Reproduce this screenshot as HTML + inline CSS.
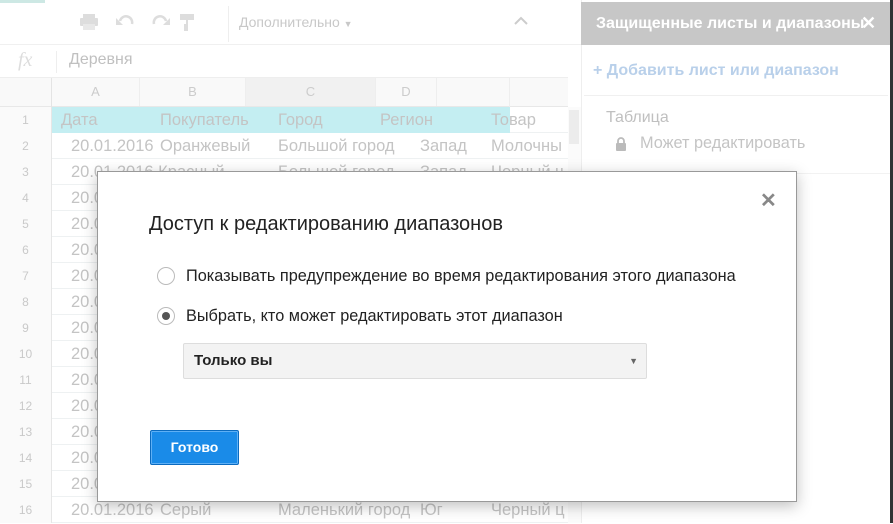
<!DOCTYPE html>
<html><head><meta charset="utf-8"><style>
*{box-sizing:border-box;margin:0;padding:0}
body{width:893px;height:523px;overflow:hidden;background:#fff;font-family:"Liberation Sans",Arial,sans-serif;position:relative;color:#bbb}
.a{position:absolute}
.row{position:absolute;left:0;width:568px;height:26px;border-bottom:1px solid #eef1f2;font-size:16.5px;line-height:27px}
.num{position:absolute;left:0;width:52px;text-align:center;font-size:12px;color:#c9c9c9;background:#fafafa;height:26px;border-right:1px solid #e6e6e6}
.c{position:absolute;top:0;white-space:nowrap;overflow:hidden;height:26px;color:#c4c4c4}
</style></head><body>
<div class="a" style="left:0;top:0;width:45px;height:3px;background:#cde8e4"></div>
<div class="a" style="left:0;top:5px;width:581px;height:40px;border-bottom:1px solid #f0f0f0"></div>
<div class="a" style="left:228px;top:6px;width:1px;height:36px;background:#eee"></div>
<svg class="a" style="left:78px;top:12px" width="120" height="20" viewBox="0 0 120 20" fill="#ddd">
<rect x="2" y="6" width="18" height="8" rx="1"/><rect x="5" y="2" width="12" height="4"/><rect x="5" y="12" width="12" height="6" fill="#e8e8e8"/>
<path d="M42 9 a6 6 0 0 1 12 3" stroke="#ddd" stroke-width="2.5" fill="none"/><path d="M38 6 v7 h7z"/>
<path d="M88 9 a6 6 0 0 0 -12 3" stroke="#ddd" stroke-width="2.5" fill="none"/><path d="M92 6 v7 h-7z"/>
<rect x="102" y="2" width="14" height="6"/><rect x="108" y="8" width="2" height="4"/><rect x="106" y="12" width="4" height="7"/>
</svg>
<div class="a" style="left:239px;top:14px;font-size:14px;color:#c8c8c8">Дополнительно <span style="font-size:9px">▼</span></div>
<svg class="a" style="left:513px;top:14px" width="16" height="12"><path d="M2 10 L8 4 L14 10" stroke="#ccc" stroke-width="2" fill="none"/></svg>
<div class="a" style="left:18px;top:49px;font-family:'Liberation Serif',serif;font-style:italic;font-size:20px;color:#ddd">fx</div>
<div class="a" style="left:56px;top:51px;width:1px;height:22px;background:#eee"></div>
<div class="a" style="left:69px;top:51px;font-size:16px;color:#c0c0c0">Деревня</div>
<div class="a" style="left:0;top:77px;width:568px;height:30px;background:#f9f9f9;border-top:1px solid #eee;border-bottom:1px solid #e8e8e8;font-size:13px;color:#ccc;line-height:28px">
<div class="a" style="left:0;width:52px;height:29px;border-right:1px solid #e4e4e4"></div>
<div class="a" style="left:52px;width:88px;text-align:center;border-right:1px solid #eee">A</div>
<div class="a" style="left:140px;width:106px;text-align:center;border-right:1px solid #eee">B</div>
<div class="a" style="left:246px;width:130px;text-align:center;border-right:1px solid #eee;background:#f1f1f1">C</div>
<div class="a" style="left:376px;width:61px;text-align:center;border-right:1px solid #eee">D</div>
<div class="a" style="left:437px;width:73px;border-right:1px solid #eee;height:29px"></div>
</div>
<div class="a" style="left:568px;top:107px;width:13px;height:416px;background:#fbfbfb"></div>
<div class="a" style="left:569px;top:110px;width:10px;height:34px;background:#ececec"></div>
<div class="row" style="top:107px"><div class="num">1</div><div class="c" style="left:52px;width:458px;background:#c4eef2"></div><div class="c" style="left:61px">Дата</div><div class="c" style="left:160px">Покупатель</div><div class="c" style="left:278px">Город</div><div class="c" style="left:380px">Регион</div><div class="c" style="left:491px">Товар</div></div>
<div class="row" style="top:133px"><div class="num">2</div><div class="c" style="left:71px">20.01.2016</div><div class="c" style="left:160px">Оранжевый</div><div class="c" style="left:278px;width:140px">Большой город</div><div class="c" style="left:420px">Запад</div><div class="c" style="left:491px;width:72px">Молочный</div></div>
<div class="row" style="top:159px"><div class="num">3</div><div class="c" style="left:71px">20.01.2016 Красный</div><div class="c" style="left:278px;width:140px">Большой город</div><div class="c" style="left:420px">Запад</div><div class="c" style="left:491px">Черный ч</div></div>
<div class="row" style="top:185px"><div class="num">4</div><div class="c" style="left:71px">20.01</div></div>
<div class="row" style="top:211px"><div class="num">5</div><div class="c" style="left:71px">20.01</div></div>
<div class="row" style="top:237px"><div class="num">6</div><div class="c" style="left:71px">20.01</div></div>
<div class="row" style="top:263px"><div class="num">7</div><div class="c" style="left:71px">20.01</div></div>
<div class="row" style="top:289px"><div class="num">8</div><div class="c" style="left:71px">20.01</div></div>
<div class="row" style="top:315px"><div class="num">9</div><div class="c" style="left:71px">20.01</div></div>
<div class="row" style="top:341px"><div class="num">10</div><div class="c" style="left:71px">20.01</div></div>
<div class="row" style="top:367px"><div class="num">11</div><div class="c" style="left:71px">20.01</div></div>
<div class="row" style="top:393px"><div class="num">12</div><div class="c" style="left:71px">20.01</div></div>
<div class="row" style="top:419px"><div class="num">13</div><div class="c" style="left:71px">20.01</div></div>
<div class="row" style="top:445px"><div class="num">14</div><div class="c" style="left:71px">20.01</div></div>
<div class="row" style="top:471px"><div class="num">15</div><div class="c" style="left:71px">20.01</div></div>
<div class="row" style="top:497px"><div class="num">16</div><div class="c" style="left:71px">20.01.2016</div><div class="c" style="left:160px">Серый</div><div class="c" style="left:278px">Маленький город</div><div class="c" style="left:420px">Юг</div><div class="c" style="left:491px">Черный ц</div></div>
<div class="a" style="left:581px;top:0;width:312px;height:523px;border-left:1px solid #eee;background:#fff"></div>
<div class="a" style="left:890px;top:0;width:3px;height:523px;background:#333"></div>
<div class="a" style="left:581px;top:2px;width:309px;height:43px;background:#c7c7c7;color:#fff;font-weight:bold;font-size:16px;line-height:43px;padding-left:15px;white-space:nowrap;overflow:hidden">Защищенные листы и диапазоны<span style="position:absolute;left:280px;font-size:18px">✕</span></div>
<div class="a" style="left:593px;top:62px;font-size:16px;font-weight:bold;color:#b9d0ea">+ Добавить лист или диапазон</div>
<div class="a" style="left:584px;top:95px;width:304px;height:1px;background:#f0f0f0"></div>
<div class="a" style="left:606px;top:109px;font-size:16px;color:#c0c0c0">Таблица</div>
<svg class="a" style="left:615px;top:137px" width="12" height="14"><path d="M3 6 V4 a3 3 0 0 1 6 0 V6" stroke="#bbb" stroke-width="1.8" fill="none"/><rect x="1" y="6" width="10" height="8" rx="1" fill="#bbb"/></svg>
<div class="a" style="left:640px;top:134px;font-size:16.3px;color:#c4c4c4">Может редактировать</div>
<div class="a" style="left:797px;top:173px;width:93px;height:1px;background:#f2f2f2"></div>
<div class="a" style="left:97px;top:171px;width:700px;height:331px;background:#fff;border:1px solid #999;box-shadow:0 4px 14px rgba(0,0,0,.25)">
<div class="a" style="left:662px;top:16px;font-size:20px;color:#888;font-weight:bold">✕</div>
<div class="a" style="left:51px;top:41px;font-size:20px;color:#222">Доступ к редактированию диапазонов</div>
<div class="a" style="left:59px;top:95px;width:18px;height:18px;border:1px solid #bbb;border-radius:50%"></div>
<div class="a" style="left:88px;top:95px;font-size:16.3px;color:#222">Показывать предупреждение во время редактирования этого диапазона</div>
<div class="a" style="left:59px;top:135px;width:18px;height:18px;border:1px solid #bbb;border-radius:50%"><div style="margin:4px;width:8px;height:8px;border-radius:50%;background:#555"></div></div>
<div class="a" style="left:88px;top:135px;font-size:16.3px;color:#222">Выбрать, кто может редактировать этот диапазон</div>
<div class="a" style="left:85px;top:171px;width:464px;height:36px;background:#f3f3f3;border:1px solid #ddd;border-radius:2px;font-size:15px;font-weight:bold;color:#222;line-height:34px;padding-left:10px">Только вы<span style="position:absolute;right:8px;top:0;font-size:9px;color:#666">▼</span></div>
<div class="a" style="left:52px;top:258px;width:89px;height:35px;background:#1a8be8;border:1px solid #0b6bc0;box-shadow:inset 0 0 0 1px #5fb0f5;border-radius:2px;color:#fff;font-size:14px;font-weight:bold;text-align:center;line-height:33px">Готово</div>
</div>
</body></html>
